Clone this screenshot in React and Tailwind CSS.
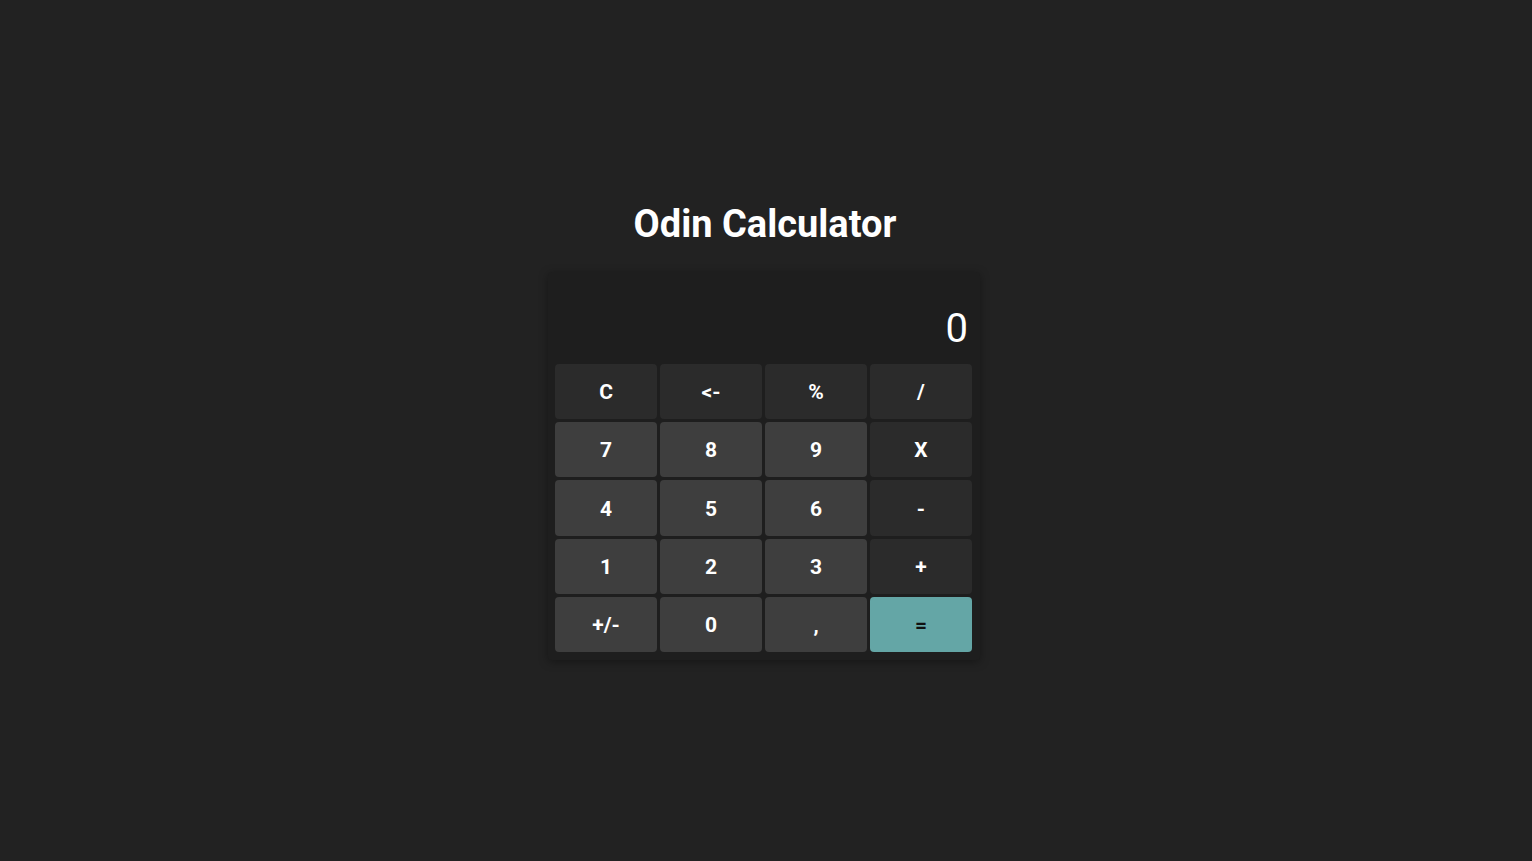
import React from "react";

const rows = [
  [["C", "op"], ["<-", "op"], ["%", "op"], ["/", "op"]],
  [["7", "num"], ["8", "num"], ["9", "num"], ["X", "op"]],
  [["4", "num"], ["5", "num"], ["6", "num"], ["-", "op"]],
  [["1", "num"], ["2", "num"], ["3", "num"], ["+", "op"]],
  [["+/-", "num"], ["0", "num"], [",", "num"], ["=", "eq"]],
];

function Key({ label, kind }) {
  const base =
    "h-[55.25px] rounded-[4px] flex items-center justify-center pt-[2px] text-[21px] font-bold leading-none";
  const color =
    kind === "num"
      ? "bg-[#3e3e3e] text-white"
      : kind === "op"
      ? "bg-[#2b2b2b] text-white"
      : "bg-[#64a6a6] text-[#111111]";
  return <div className={`${base} ${color}`}>{label}</div>;
}

export default function App() {
  return (
    <div
      className="w-full h-screen bg-[#222222] flex flex-col items-center justify-center"
      style={{ fontFamily: "Roboto, 'Liberation Sans', sans-serif" }}
    >
      <h1 className="text-[38px] font-bold text-white leading-[44px] pt-[1px] mb-[26px] mr-[2px]">
        Odin Calculator
      </h1>
      <div className="w-[432px] mr-[4px] bg-[#1e1e1e] rounded-[4px] pt-2 pb-2 pl-[7px] pr-[8px] shadow-[0_2px_10px_rgba(0,0,0,0.35)]">
        <div className="h-[81px] flex items-end justify-end pr-[4px] pb-[12px] mb-[3px]">
          <span className="text-[40px] leading-none text-white">0</span>
        </div>
        <div className="grid grid-cols-4 gap-[3px]">
          {rows.flat().map(([label, kind], i) => (
            <Key key={i} label={label} kind={kind} />
          ))}
        </div>
      </div>
    </div>
  );
}
